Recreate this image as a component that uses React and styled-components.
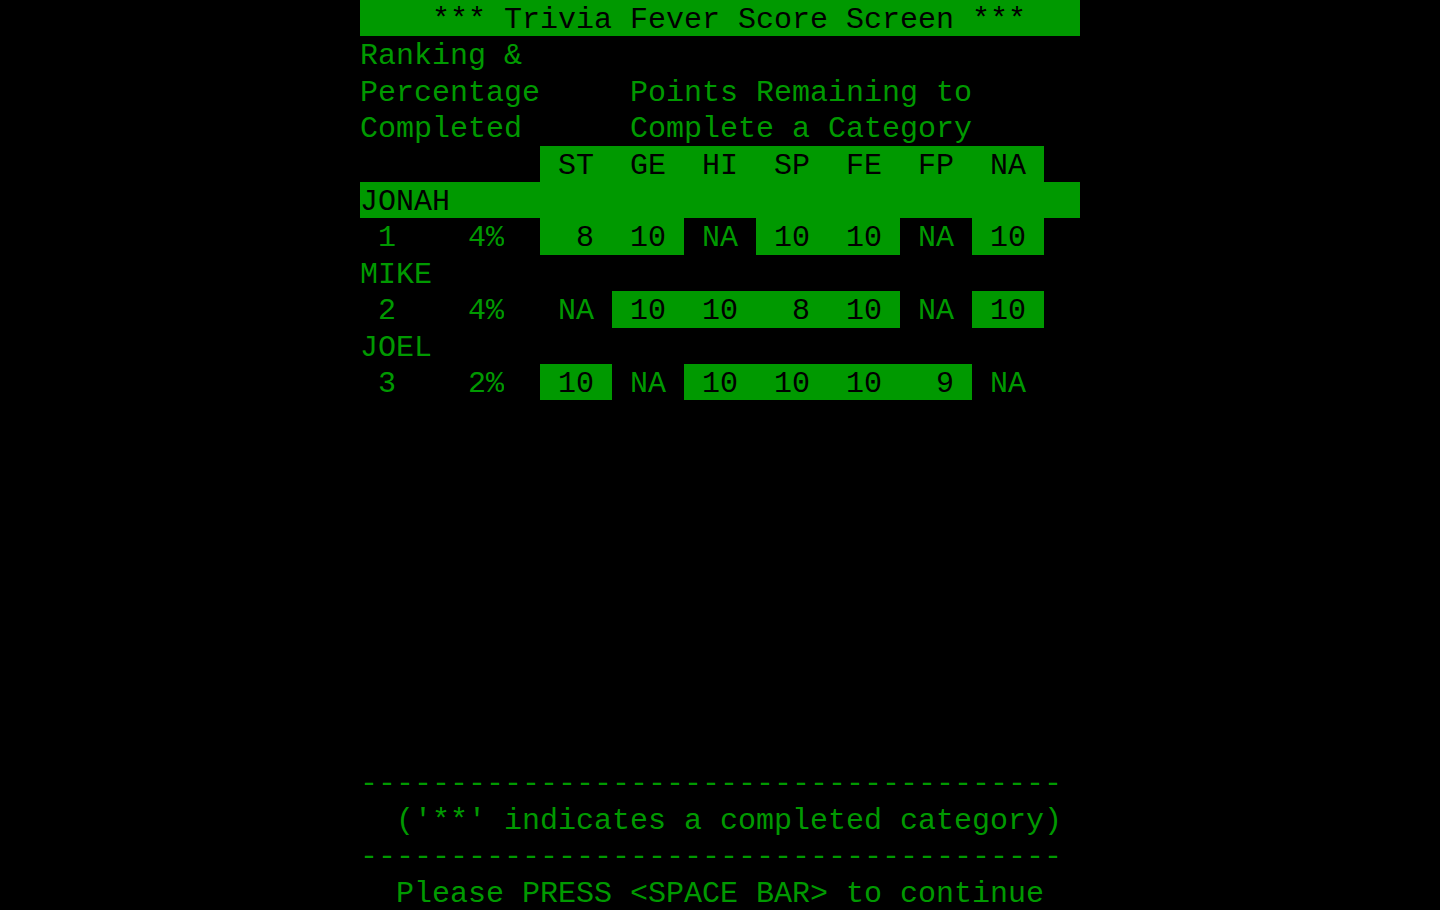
import styled, { createGlobalStyle } from "styled-components";

const GREEN = "#009900";
const CHAR_W = 18;
const ROW_H = 36.4; // 910 / 25 text rows

const GlobalStyle = createGlobalStyle`
  html, body {
    margin: 0;
    padding: 0;
    background: #000;
  }
  body {
    font-family: "Liberation Mono", "DejaVu Sans Mono", monospace;
  }
`;

const Screen = styled.div`
  width: ${CHAR_W * 40}px;
  height: 910px;
  margin: 0 auto;
  display: flex;
  flex-direction: column;
  background: #000;
  color: ${GREEN};
  font-family: "Liberation Mono", "DejaVu Sans Mono", monospace;
  font-size: 30px;
`;

const Line = styled.div`
  display: grid;
  grid-template-columns: repeat(40, ${CHAR_W}px);
  height: ${ROW_H}px;
  background: ${(p) => (p.$inverse ? GREEN : "transparent")};
  color: ${(p) => (p.$inverse ? "#000" : GREEN)};
`;

const Cell = styled.span`
  grid-column: ${(p) => p.$col + 1} / span ${(p) => p.$span};
  box-sizing: border-box;
  padding-top: 2px;
  line-height: ${ROW_H}px;
  white-space: pre;
  overflow: hidden;
  background: ${(p) => (p.$inverse ? GREEN : "transparent")};
  color: ${(p) => (p.$inverse ? "#000" : "inherit")};
`;

const Footer = styled.div`
  margin-top: auto;
  display: flex;
  flex-direction: column;
`;

const categories = ["ST", "GE", "HI", "SP", "FE", "FP", "NA"];

const players = [
  { name: "JONAH", rank: 1, pct: 4, current: true, left: [8, 10, "NA", 10, 10, "NA", 10] },
  { name: "MIKE", rank: 2, pct: 4, left: ["NA", 10, 10, 8, 10, "NA", 10] },
  { name: "JOEL", rank: 3, pct: 2, left: [10, "NA", 10, 10, 10, 9, "NA"] },
];

const Text = ({ col = 0, children, inverse }) => (
  <Cell $col={col} $span={children.length} $inverse={inverse}>
    {children}
  </Cell>
);

const PlayerRows = ({ player }) => (
  <>
    <Line $inverse={player.current}>
      <Text>{player.name}</Text>
    </Line>
    <Line>
      <Text>{` ${player.rank}    ${player.pct}%`}</Text>
      {player.left.map((v, i) => (
        <Text key={i} col={10 + i * 4} inverse={v !== "NA"}>
          {` ${String(v).padStart(2)} `}
        </Text>
      ))}
    </Line>
  </>
);

const DASHES = "-".repeat(39);

export default function App() {
  return (
    <>
      <GlobalStyle />
      <Screen>
        <Line $inverse>
          <Text col={4}>*** Trivia Fever Score Screen ***</Text>
        </Line>
        <Line>
          <Text>Ranking &amp;</Text>
        </Line>
        <Line>
          <Text>Percentage</Text>
          <Text col={15}>Points Remaining to</Text>
        </Line>
        <Line>
          <Text>Completed</Text>
          <Text col={15}>Complete a Category</Text>
        </Line>
        <Line>
          <Text col={10} inverse>
            {categories.map((c) => ` ${c} `).join("")}
          </Text>
        </Line>
        {players.map((p) => (
          <PlayerRows key={p.name} player={p} />
        ))}
        <Footer>
          <Line>
            <Text>{DASHES}</Text>
          </Line>
          <Line>
            <Text col={2}>('**' indicates a completed category)</Text>
          </Line>
          <Line>
            <Text>{DASHES}</Text>
          </Line>
          <Line>
            <Text col={2}>Please PRESS &lt;SPACE BAR&gt; to continue</Text>
          </Line>
        </Footer>
      </Screen>
    </>
  );
}
